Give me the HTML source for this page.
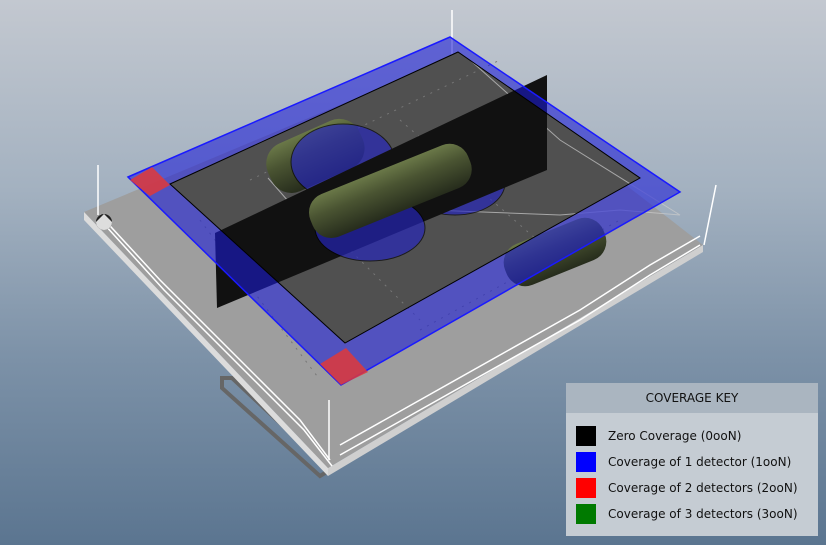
<!DOCTYPE html><html><head><style>
body{margin:0;width:826px;height:545px;overflow:hidden;font-family:"DejaVu Sans","Liberation Sans",sans-serif;background:linear-gradient(#c3c8d0 0%,#a3b1c0 35%,#7d92a8 65%,#5b7590 100%);position:relative}
.key{position:absolute;left:566px;top:383px;width:252px;height:153px;background:#c5ccd3;}
.kh{height:30px;background:#aab5c0;text-align:center;line-height:31px;font-size:12px;color:#111}
.row{position:absolute;left:10px;font-size:12px;color:#111;height:20px;line-height:20px}
.row i{display:inline-block;width:20px;height:20px;vertical-align:top;margin-right:12px}
</style></head><body>
<svg width="826" height="545" style="position:absolute;left:0;top:0">
<defs><linearGradient id="tk" x1="0" y1="0" x2="0" y2="1"><stop offset="0" stop-color="#6a7848"/><stop offset="0.4" stop-color="#4a5432"/><stop offset="1" stop-color="#262c1c"/></linearGradient></defs>
<polygon points="222,378 232,378 330,470 320,476 222,388" fill="none" stroke="#666" stroke-width="4"/>
<polygon points="84,212 459,55 703,245 328,468" fill="#9e9e9e"/>
<polygon points="84,212 328,468 328,476 84,220" fill="#dcdcdc"/>
<polygon points="328,468 703,245 703,252 328,476" fill="#cfcfcf"/>
<polygon points="170,184 458,52 640,178 345,343" fill="#505050"/>
<g stroke="#fff" stroke-width="1.5" fill="none">
<polyline points="100,215 160,280 210,330 260,380 300,420 330,460"/>
<polyline points="104,224 164,290 214,340 264,390 304,430 332,466"/>
<polyline points="340,455 420,410 500,365 580,320 650,275 700,245"/>
<polyline points="340,445 420,400 500,355 580,310 650,265 700,236"/>
<line x1="98" y1="165" x2="98" y2="215"/><line x1="716" y1="185" x2="704" y2="245"/><line x1="452" y1="10" x2="452" y2="55"/><line x1="329" y1="400" x2="329" y2="460"/>
</g>
<g stroke="#ccc" stroke-width="1" fill="none" opacity="0.7"><polyline points="268,178 335,255 430,210 560,215 620,210 680,215 560,140 470,60"/></g>
<g stroke="#777" stroke-width="1" stroke-dasharray="2 6">
<line x1="200" y1="220" x2="320" y2="380"/><line x1="420" y1="330" x2="620" y2="220"/><line x1="250" y1="180" x2="500" y2="60"/><line x1="300" y1="200" x2="420" y2="320"/><line x1="400" y1="120" x2="560" y2="260"/>
</g>
<g transform="rotate(-24 315 155)"><rect x="265" y="130" width="100" height="52" rx="22" fill="url(#tk)"/></g>
<ellipse cx="343" cy="162" rx="52" ry="38" fill="#2525c0" opacity="0.65" stroke="#000"/>
<ellipse cx="455" cy="183" rx="50" ry="32" fill="#2525c0" opacity="0.65" stroke="#000"/>
<polygon points="215,233 547,75 547,170 217,308" fill="#111"/>
<ellipse cx="370" cy="228" rx="55" ry="33" fill="#2525c0" opacity="0.65" stroke="#000"/>
<g transform="rotate(-22 390 190)"><rect x="305" y="168" width="170" height="46" rx="20" fill="url(#tk)"/></g>
<g transform="rotate(-22 555 252)"><rect x="502" y="230" width="106" height="44" rx="20" fill="url(#tk)"/></g>
<path d="M128,177 L450,37 L680,192 L341,385 Z M170,184 L345,343 L640,178 L458,52 Z" fill="#1c1cd8" opacity="0.58" fill-rule="evenodd"/>
<polygon points="128,177 450,37 680,192 341,385" fill="none" stroke="#1a1aff" stroke-width="1.5"/>
<polygon points="170,184 458,52 640,178 345,343" fill="none" stroke="#000" stroke-width="1"/>
<polygon points="130,180 152,167 170,185 150,196" fill="#e03838" opacity="0.85"/>
<polygon points="320,364 346,348 368,372 341,385" fill="#e03838" opacity="0.85"/>
<circle cx="104" cy="222" r="8" fill="#222"/><path d="M104 214 L112 222 A8 8 0 0 1 96 222Z" fill="#ddd"/>
</svg>
<div class="key"><div class="kh">COVERAGE KEY</div>
<div class="row" style="top:43px"><i style="background:#000"></i>Zero Coverage (0ooN)</div>
<div class="row" style="top:69px"><i style="background:#0000ff"></i>Coverage of 1 detector (1ooN)</div>
<div class="row" style="top:95px"><i style="background:#ff0000"></i>Coverage of 2 detectors (2ooN)</div>
<div class="row" style="top:121px"><i style="background:#007a00"></i>Coverage of 3 detectors (3ooN)</div>
</div>
</body></html>
